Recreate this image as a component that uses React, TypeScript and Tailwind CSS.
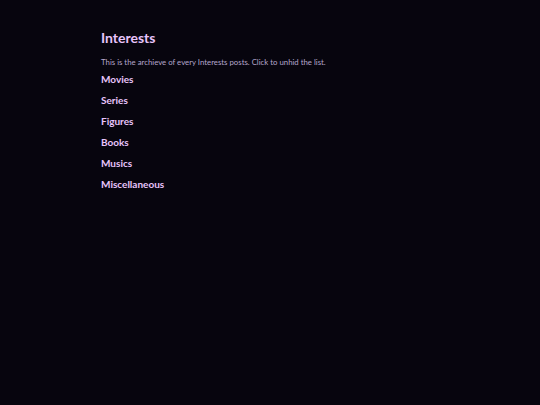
export default function App() {
  const items = ["Movies", "Series", "Figures", "Books", "Musics", "Miscellaneous"];
  return (
    <div
      className="min-h-[405px] w-full bg-[#07050e] pl-[101px] pt-[29px]"
      style={{ fontFamily: 'Lato, "Noto Sans", sans-serif' }}
    >
      <h1 className="text-[14px] font-bold leading-[18px] text-[#e8c4fb]">Interests</h1>
      <p className="mt-[10px] text-[7.8px] leading-[10px] text-[#b4a6cc]">
        This is the archieve of every Interests posts. Click to unhid the list.
      </p>
      <ul className="mt-[5px] flex flex-col gap-[7px]">
        {items.map((name) => (
          <li key={name} className="text-[10px] font-bold leading-[14px] text-[#e8c4fb]">
            {name}
          </li>
        ))}
      </ul>
    </div>
  );
}
